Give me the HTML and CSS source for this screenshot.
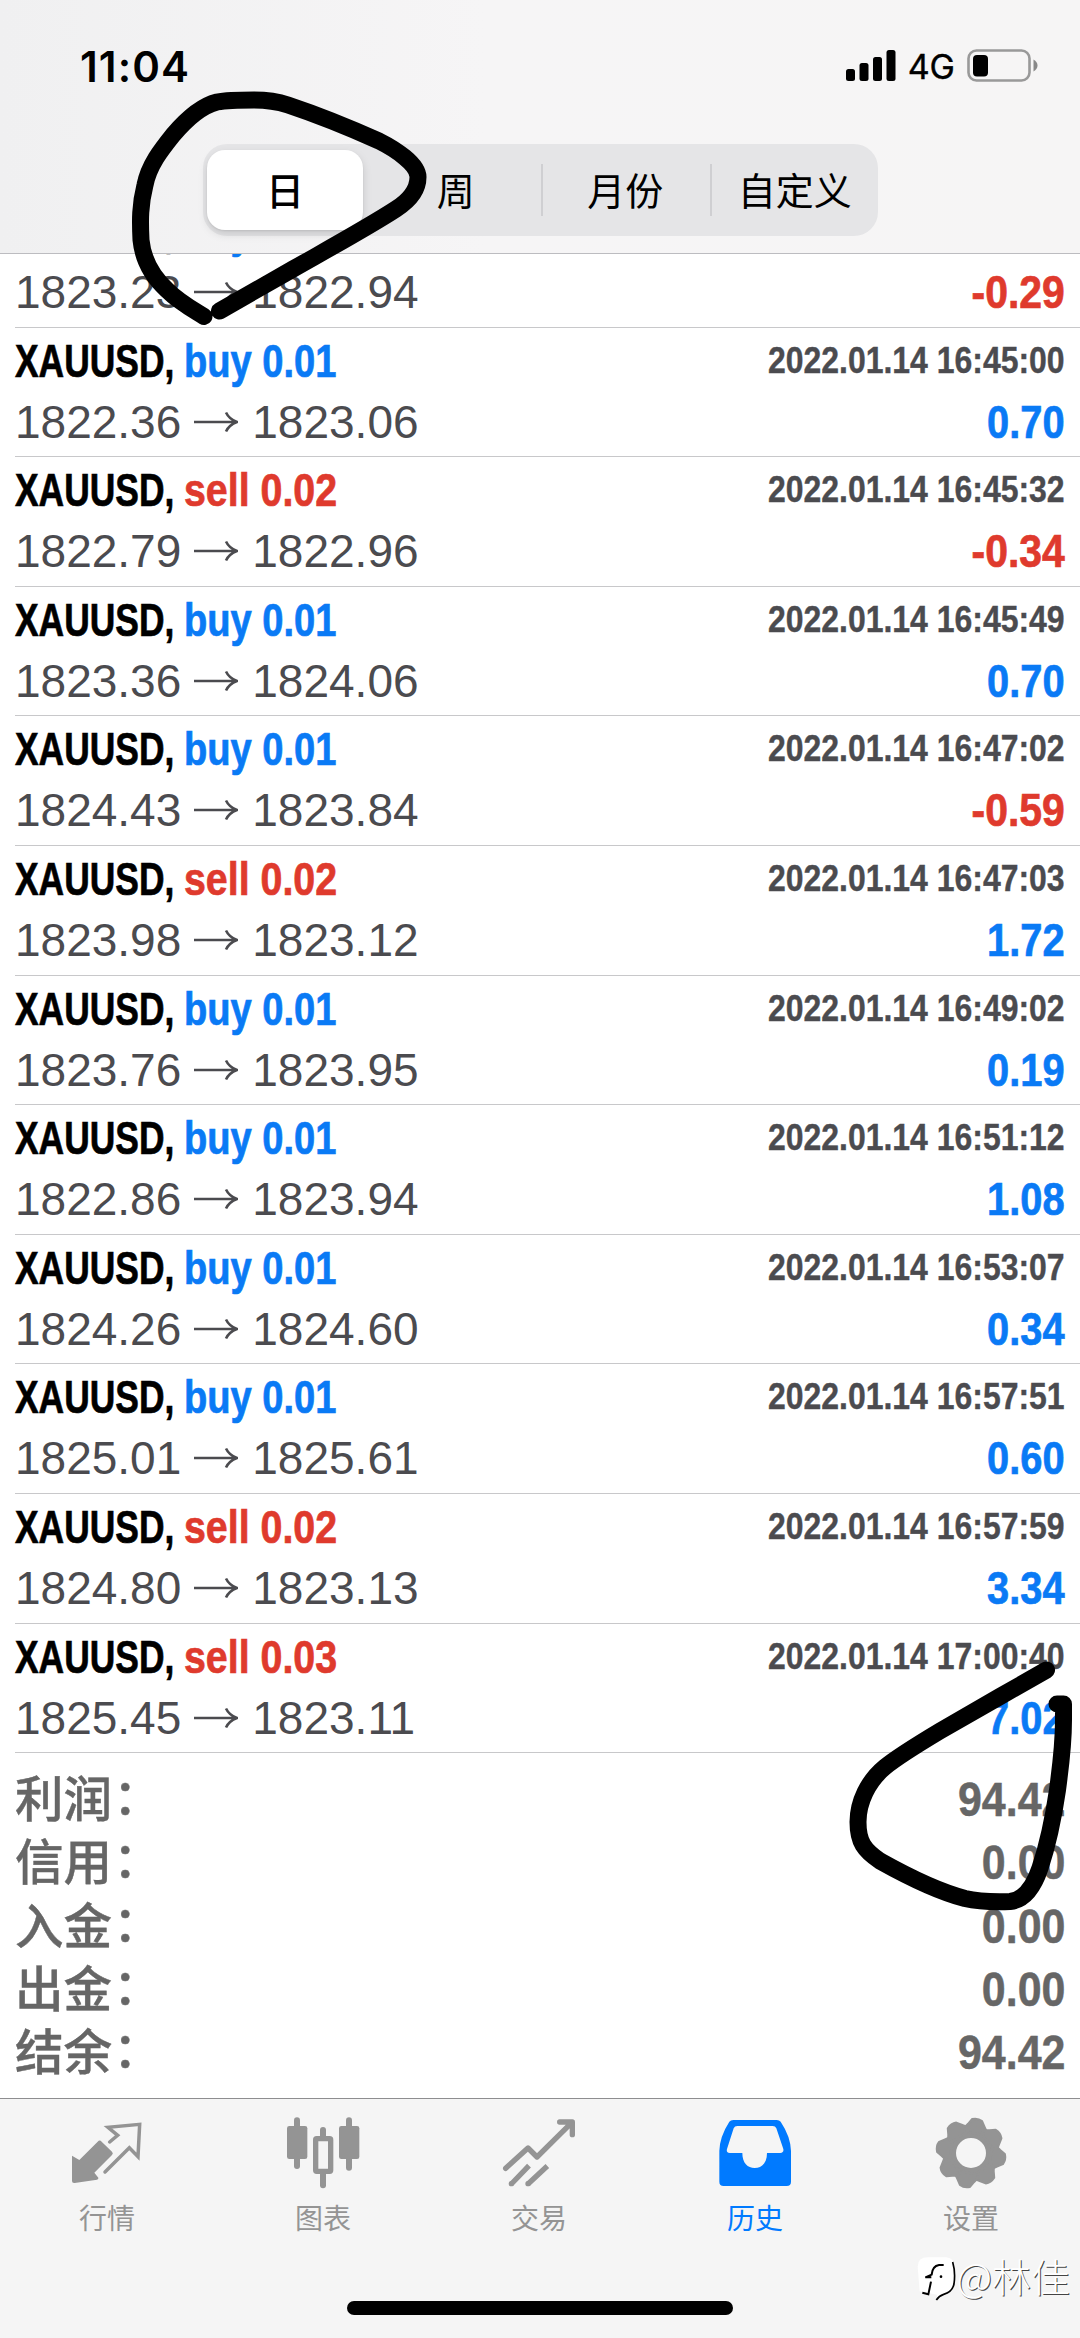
FILE: index.html
```html
<!DOCTYPE html>
<html lang="zh-CN">
<head>
<meta charset="utf-8">
<title>历史</title>
<link rel="stylesheet" href="styles.css">
</head>
<body>
<svg class="defs" width="0" height="0"><symbol id="arrow" viewBox="0 0 44 22"><path d="M0 11H42M32 1.5Q35 8 43 11Q35 14 32 20.5" fill="none" stroke="currentColor" stroke-width="2.6"/></symbol></svg>
<div class="screen">
  <header class="header">
    <div class="status">
      <span class="clock">11:04</span>
      <div class="indicators">
        <svg class="signal" width="50" height="32" viewBox="0 0 50 32"><rect x="0" y="19" width="9" height="12" rx="2.5"/><rect x="13.5" y="13" width="9" height="18" rx="2.5"/><rect x="27" y="7" width="9" height="24" rx="2.5"/><rect x="40.5" y="0" width="9" height="31" rx="2.5"/></svg>
        <span class="network">4G</span>
        <svg class="battery" width="72" height="34" viewBox="0 0 72 34"><rect x="1.5" y="1.5" width="61" height="30" rx="8" fill="none" stroke="#999" stroke-width="2.6"/><rect x="6" y="6" width="15" height="21.5" rx="4"/><path d="M66.500 10.500Q70.500 13 70.500 16.500T66.500 22.500Z" fill="#888"/></svg>
      </div>
    </div>
    <nav class="segments">
      <span class="segment active">日</span>
      <span class="segment">周</span>
      <span class="segment">月份</span>
      <span class="segment">自定义</span>
    </nav>
  </header>

  <main class="history">
    <section class="deals">
      <article class="deal"><div class="line"><span class="title"><b class="symbol">XAUUSD,</b><b class="side buy">buy 0.01</b></span></div><div class="line"><span class="prices">1823.23<svg class="arrow"><use href="#arrow"/></svg>1822.94</span><b class="profit loss">-0.29</b></div></article>
      <article class="deal"><div class="line"><span class="title"><b class="symbol">XAUUSD,</b><b class="side buy">buy 0.01</b></span><time>2022.01.14 16:45:00</time></div><div class="line"><span class="prices">1822.36<svg class="arrow"><use href="#arrow"/></svg>1823.06</span><b class="profit">0.70</b></div></article>
      <article class="deal"><div class="line"><span class="title"><b class="symbol">XAUUSD,</b><b class="side sell">sell 0.02</b></span><time>2022.01.14 16:45:32</time></div><div class="line"><span class="prices">1822.79<svg class="arrow"><use href="#arrow"/></svg>1822.96</span><b class="profit loss">-0.34</b></div></article>
      <article class="deal"><div class="line"><span class="title"><b class="symbol">XAUUSD,</b><b class="side buy">buy 0.01</b></span><time>2022.01.14 16:45:49</time></div><div class="line"><span class="prices">1823.36<svg class="arrow"><use href="#arrow"/></svg>1824.06</span><b class="profit">0.70</b></div></article>
      <article class="deal"><div class="line"><span class="title"><b class="symbol">XAUUSD,</b><b class="side buy">buy 0.01</b></span><time>2022.01.14 16:47:02</time></div><div class="line"><span class="prices">1824.43<svg class="arrow"><use href="#arrow"/></svg>1823.84</span><b class="profit loss">-0.59</b></div></article>
      <article class="deal"><div class="line"><span class="title"><b class="symbol">XAUUSD,</b><b class="side sell">sell 0.02</b></span><time>2022.01.14 16:47:03</time></div><div class="line"><span class="prices">1823.98<svg class="arrow"><use href="#arrow"/></svg>1823.12</span><b class="profit">1.72</b></div></article>
      <article class="deal"><div class="line"><span class="title"><b class="symbol">XAUUSD,</b><b class="side buy">buy 0.01</b></span><time>2022.01.14 16:49:02</time></div><div class="line"><span class="prices">1823.76<svg class="arrow"><use href="#arrow"/></svg>1823.95</span><b class="profit">0.19</b></div></article>
      <article class="deal"><div class="line"><span class="title"><b class="symbol">XAUUSD,</b><b class="side buy">buy 0.01</b></span><time>2022.01.14 16:51:12</time></div><div class="line"><span class="prices">1822.86<svg class="arrow"><use href="#arrow"/></svg>1823.94</span><b class="profit">1.08</b></div></article>
      <article class="deal"><div class="line"><span class="title"><b class="symbol">XAUUSD,</b><b class="side buy">buy 0.01</b></span><time>2022.01.14 16:53:07</time></div><div class="line"><span class="prices">1824.26<svg class="arrow"><use href="#arrow"/></svg>1824.60</span><b class="profit">0.34</b></div></article>
      <article class="deal"><div class="line"><span class="title"><b class="symbol">XAUUSD,</b><b class="side buy">buy 0.01</b></span><time>2022.01.14 16:57:51</time></div><div class="line"><span class="prices">1825.01<svg class="arrow"><use href="#arrow"/></svg>1825.61</span><b class="profit">0.60</b></div></article>
      <article class="deal"><div class="line"><span class="title"><b class="symbol">XAUUSD,</b><b class="side sell">sell 0.02</b></span><time>2022.01.14 16:57:59</time></div><div class="line"><span class="prices">1824.80<svg class="arrow"><use href="#arrow"/></svg>1823.13</span><b class="profit">3.34</b></div></article>
      <article class="deal"><div class="line"><span class="title"><b class="symbol">XAUUSD,</b><b class="side sell">sell 0.03</b></span><time>2022.01.14 17:00:40</time></div><div class="line"><span class="prices">1825.45<svg class="arrow"><use href="#arrow"/></svg>1823.11</span><b class="profit">7.02</b></div></article>
    </section>
    <section class="summary">
      <div class="total"><span class="name">利润<i class="colon" lang="zh-TW">：</i></span><b class="amount">94.42</b></div>
      <div class="total"><span class="name">信用<i class="colon" lang="zh-TW">：</i></span><b class="amount">0.00</b></div>
      <div class="total"><span class="name">入金<i class="colon" lang="zh-TW">：</i></span><b class="amount">0.00</b></div>
      <div class="total"><span class="name">出金<i class="colon" lang="zh-TW">：</i></span><b class="amount">0.00</b></div>
      <div class="total"><span class="name">结余<i class="colon" lang="zh-TW">：</i></span><b class="amount">94.42</b></div>
    </section>
  </main>

  <footer class="tabbar">
    <nav class="tabs">
      <div class="tab">
        <svg class="icon" viewBox="54 15 240 240"><path d="M66 152L88 165L143 110Q149 103 155 110L186 140Q191 145 186 150L133 203L145 218Q146 223 141 224L74 234Q66 235 66 228Z" fill="currentColor"/><path d="M179 111L203 91L174 67L269 58L264 155L238 128L165 201" fill="none" stroke="currentColor" stroke-width="10.500" stroke-linecap="round"/></svg>
        <span>行情</span>
      </div>
      <div class="tab">
        <svg class="icon" viewBox="702 15 240 240"><g fill="currentColor"><rect x="711" y="63" width="61" height="99" rx="7"/><rect x="732" y="37" width="18" height="155" rx="9"/><rect x="867" y="63" width="61" height="99" rx="7"/><rect x="888" y="37" width="18" height="160" rx="9"/><rect x="810" y="66" width="18" height="40" rx="9"/><rect x="810" y="195" width="18" height="55" rx="9"/></g><rect x="797" y="101" width="45" height="98" rx="3" fill="none" stroke="currentColor" stroke-width="16"/></svg>
        <span>图表</span>
      </div>
      <div class="tab">
        <svg class="icon" viewBox="30 15 240 240"><g fill="none" stroke="currentColor" stroke-width="16" stroke-linejoin="round"><path stroke-linecap="round" d="M47 190L114 129L141 156L245 53M209 51H247V89"/><path d="M64 237L117 182M114 237L172 183"/></g><circle cx="64" cy="236" r="8" fill="currentColor"/><circle cx="114" cy="236" r="8" fill="currentColor"/></svg>
        <span>交易</span>
      </div>
      <div class="tab selected">
        <svg class="icon" viewBox="678 15 240 240"><path fill="currentColor" fill-rule="evenodd" d="M730 45H860Q868 45 872 50Q902 95 903 138V230Q903 243 890 243H701Q688 243 688 230V138Q689 95 718 50Q722 45 730 45ZM742 63Q734 63 731 70L711 132Q708 143 719 144H757C757 174 773 189 794 189C816 189 831 174 831 144H871Q882 143 880 132L859 70Q856 63 848 63Z"/></svg>
        <span>历史</span>
      </div>
      <div class="tab">
        <svg class="icon" viewBox="96 15 240 240">
          <defs><path id="tooth" d="M-32 -74L-25 -84L-16 -100Q0 -107 14 -100L25 -84L32 -74V-60H-32Z"/></defs>
          <circle cx="213" cy="144" r="64" fill="none" stroke="currentColor" stroke-width="38"/>
          <g transform="translate(213 144) rotate(11)" fill="currentColor" stroke="currentColor" stroke-width="7" stroke-linejoin="round"><use href="#tooth"/><use href="#tooth" transform="rotate(45)"/><use href="#tooth" transform="rotate(90)"/><use href="#tooth" transform="rotate(135)"/><use href="#tooth" transform="rotate(180)"/><use href="#tooth" transform="rotate(225)"/><use href="#tooth" transform="rotate(270)"/><use href="#tooth" transform="rotate(315)"/></g>
        </svg>
        <span>设置</span>
      </div>
    </nav>
    <div class="home"></div>
  </footer>

  <div class="watermark">
    <svg width="42" height="48" viewBox="36 453 126 144"><path d="M44 488Q44 460 75 460H130Q154 462 154 490V540Q153 562 130 569Q110 573 102 585V572L50 562Z" fill="#fff"/><g fill="none" stroke="#000"><path d="M149 474Q158 505 153 540Q148 564 122 571Q108 575 100 588" stroke-width="5"/><path d="M122 483H108Q88 486 86 512L67 520H85M84 533L76 571L58 566" stroke-width="6"/></g><circle cx="114" cy="518" r="4"/></svg>
    <span>@林佳</span>
  </div>

  <svg class="ink" width="1080" height="2338" viewBox="0 0 1080 2338">
    <path d="M204 316.500C192 309 179 302 167 290C153 277 143 260 141 240C140 220 140 205 145 185C149 165 161 150 173 135C184 122 201 106 217 102C228 100 240 100 254 100C268 100 276 101 288 105C318 115 350 128 379 141C395 149 418 164 418 177C418 190 410 200 396 209C370 226 330 248 293 269L219.500 311"/>
    <path d="M1046.500 1670L1000 1696.500L940 1731C915 1746 896 1758 885 1767C868 1781 858 1802 858 1822C858 1842 864 1850 880 1861C905 1875 940 1892 965 1898.500C980 1902 995 1902 1010 1901.500C1024 1900 1034 1886 1040 1868C1050 1838 1054 1814 1057.500 1790C1060 1770 1063.500 1748 1063.500 1720V1704H1057"/>
  </svg>
</div>
</body>
</html>
```
FILE: styles.css
```css
* { box-sizing: border-box; }

body {
  margin: 0;
  background: #fff;
  font-family: "Liberation Sans", "Noto Sans CJK SC", sans-serif;
}

.defs { position: absolute; }

.screen {
  position: relative;
  display: flex;
  flex-direction: column;
  width: 1080px;
  height: 2338px;
  overflow: hidden;
}

.header {
  position: relative;
  z-index: 1;
  flex: none;
  height: 254px;
  border-bottom: 1px solid #bcbcc0;
  background: linear-gradient(90deg, #f0f0f1, #f6f5f6 45%, #f6f5f5);
}

.status {
  display: flex;
  justify-content: space-between;
  align-items: center;
  height: 144px;
  padding: 0 41px 12px 80px;
  font-family: Inter, sans-serif;
}

.clock {
  font-size: 42px;
  font-weight: 600;
  letter-spacing: 1.1px;
}

.indicators { display: flex; align-items: center; }
.network { margin: 0 12px 0 12px; font-size: 34px; font-weight: 400; -webkit-text-stroke: .4px; }

.segments {
  display: flex;
  width: 675px;
  height: 92px;
  margin-left: 203px;
  padding: 6px 4px;
  border-radius: 24px;
  background: #e5e5e7;
}

.segment {
  display: flex;
  flex: 1 0 169.5px;
  align-items: center;
  justify-content: center;
  font-family: "Noto Sans CJK SC", sans-serif;
  font-size: 38px;
  line-height: 76px;
  padding-bottom: 3px;
}

.segment + .segment + .segment {
  background: linear-gradient(#cfcfd2, #cfcfd2) left center / 2px 52px no-repeat;
}

.segment.active {
  flex: 0 0 156px;
  margin-right: 8px;
  border-radius: 18px;
  background: #fff;
  box-shadow: 0 4px 10px rgba(0, 0, 0, .13), 0 1px 2px rgba(0, 0, 0, .08);
  font-weight: 500;
}

.history { flex: 1; margin-top: -56px; }
.deals { margin-left: 15px; }

.deal {
  height: 129.6px;
  padding: 4px 15px 0 0;
  border-bottom: 1px solid #c8c8ca;
}

.line {
  display: flex;
  justify-content: space-between;
  align-items: flex-start;
  height: 60px;
  font-size: 46px;
  line-height: 60px;
  white-space: nowrap;
}

.title { display: flex; line-height: 58px; -webkit-text-stroke: .7px; }
.symbol { width: 169px; transform: scaleX(.77); transform-origin: left; }
.side { transform-origin: left; }
.buy { color: #0a7af5; transform: scaleX(.828); }
.sell { color: #df3a2d; transform: scaleX(.855); }

time {
  color: #4b4b4f;
  font-size: 37px;
  font-weight: bold;
  line-height: 58px;
  transform: scaleX(.863);
  transform-origin: right;
  -webkit-text-stroke: .4px;
}

.prices { display: flex; align-items: center; color: #4b4b4f; }
.arrow { width: 44px; height: 22px; margin: 0 14px 0 13px; }

.profit {
  color: #0a7af5;
  transform: scaleX(.865);
  transform-origin: right;
  -webkit-text-stroke: .7px;
}
.profit.loss { color: #df3a2d; transform: scaleX(.89); }

.summary { padding: 15px 15px 0; color: #666; }

.total {
  display: flex;
  justify-content: space-between;
  height: 63.3px;
  line-height: 63.3px;
}

.name {
  font-family: "Noto Sans CJK SC", sans-serif;
  font-size: 48.5px;
  font-weight: 500;
  line-height: 57px;
  -webkit-text-stroke: .4px;
}

.colon {
  margin-left: -11px;
  font-family: "Noto Sans CJK TC", sans-serif;
  font-style: normal;
}

.amount {
  font-size: 48.5px;
  transform: scaleX(.885);
  transform-origin: right;
  -webkit-text-stroke: .5px;
}

.tabbar {
  flex: none;
  height: 240px;
  border-top: 1px solid #8e8e90;
  background: #f5f5f5;
}

.tabs { display: flex; height: 202px; padding-top: 11px; }

.tab {
  display: flex;
  flex: 1;
  flex-direction: column;
  align-items: center;
  color: #949494;
  font-family: "Noto Sans CJK SC", sans-serif;
  font-size: 28px;
  line-height: 40px;
}
.tab span { margin: 7px 2px 0 0; }
.tab.selected { color: #007aff; }
.icon { width: 80px; height: 80px; }

.home {
  width: 386px;
  height: 14px;
  margin: 0 auto;
  border-radius: 7px;
  background: #000;
}

.watermark {
  position: absolute;
  top: 2254px;
  right: 10px;
  display: flex;
  align-items: center;
  color: #fff;
  font-family: "Noto Sans CJK SC", sans-serif;
  font-size: 39px;
  font-weight: 300;
  line-height: 42px;
  text-shadow: 1px 1px 0 #444;
}
.watermark span { padding-bottom: 8px; }

.ink {
  position: absolute;
  z-index: 2;
  top: 0;
  left: 0;
  fill: none;
  stroke: #000;
  stroke-width: 17px;
  stroke-linecap: round;
  stroke-linejoin: round;
}
```
